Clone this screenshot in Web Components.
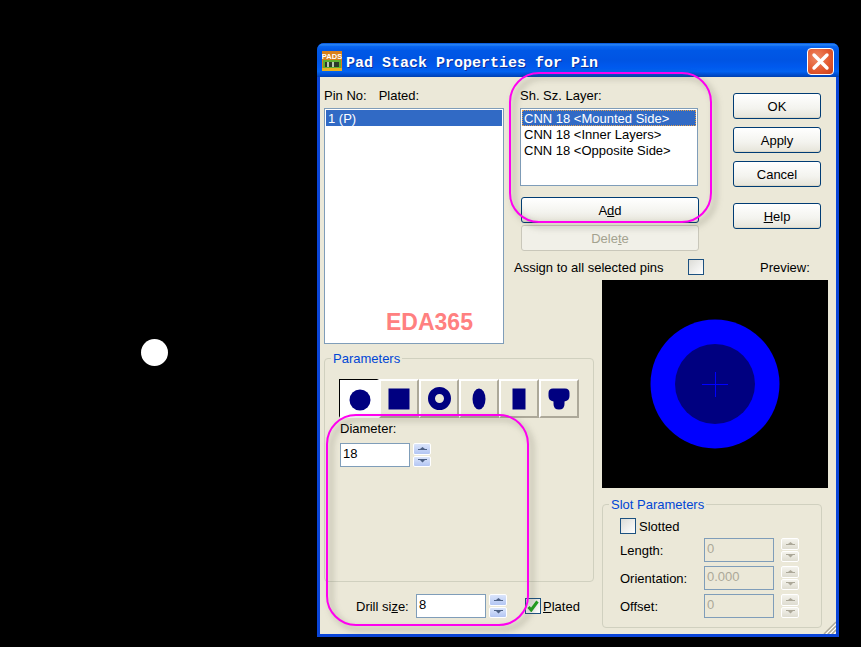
<!DOCTYPE html>
<html>
<head>
<meta charset="utf-8">
<title>Pad Stack Properties</title>
<style>
  html, body { margin: 0; height: 647px; overflow: hidden; background: #000; }
  body { position: relative; font: 13px "Liberation Sans", Arial, sans-serif; color: #000; }
  .pad-dot { position: absolute; left: 141px; top: 339px; width: 27px; height: 27px; border-radius: 50%; background: #fff; }
</style>
</head>
<body>
<div class="pad-dot"></div>

<xp-window caption="Pad Stack Properties for Pin">
  <pad-stack-dialog></pad-stack-dialog>
</xp-window>

<script>
/** Luna style window frame: caption bar, client area and size grip. */
class XpWindow extends HTMLElement {
  constructor() {
    super();
    this.attachShadow({ mode: "open" });
    this.shadowRoot.innerHTML = `
      <style>
        :host { display: block; position: absolute; left: 317px; top: 43px; width: 522px; height: 594px; box-sizing: border-box;
          background: #0a45d8; border-radius: 7px 7px 0 0; overflow: hidden; }
        .bar { display: flex; align-items: center; height: 34px; padding: 0 5px; box-sizing: border-box;
          background: linear-gradient(#0050d8 0%, #2a86f5 5%, #0a66f0 10%, #0058e6 22%, #0054e3 50%, #0059ee 70%, #0262f0 84%, #0050d4 92%, #0040b0 100%); }
        .icon { width: 20px; height: 20px; flex: none; margin-top: 2px; }
        .caption { margin-left: 4px; flex: 1; color: #fff; font: bold 15px "Liberation Mono", monospace; white-space: nowrap;
          text-shadow: 1px 1px 0 #0a2f9c; margin-top: 6px; }
        .close { width: 27px; height: 27px; flex: none; box-sizing: border-box; margin-top: 3px; border: 1px solid #fff; border-radius: 4px;
          background: radial-gradient(circle at 35% 35%, #ee8a66, #e2562c 60%, #c8401c); display: flex; align-items: center; justify-content: center; }
        .client { position: relative; height: 557px; margin: 0 3px; background: #ebe8d8; }
        .grip { position: absolute; right: 0; bottom: 0; width: 13px; height: 13px; }
      </style>
      <div class="bar">
        <svg class="icon" viewBox="0 0 20 20">
          <rect width="20" height="20" fill="#d8801a"/>
          <text x="10" y="7.5" text-anchor="middle" font-family="Liberation Sans" font-weight="bold" font-size="7.5" fill="#fff">PADS</text>
          <rect x="1" y="9" width="18" height="8" fill="#5fae2e"/>
          <rect x="3" y="11" width="14" height="5" fill="#2a3a2a"/>
          <rect x="5" y="11" width="2" height="5" fill="#b8c8b0"/>
          <rect x="10" y="11" width="2" height="5" fill="#b8c8b0"/>
          <rect x="0" y="17" width="20" height="3" fill="#e8b020"/>
        </svg>
        <div class="caption"></div>
        <div class="close">
          <svg width="19" height="19" viewBox="0 0 19 19"><path d="M3 3 L16 16 M16 3 L3 16" stroke="#fff" stroke-width="3.4" stroke-linecap="round"/></svg>
        </div>
      </div>
      <div class="client">
        <slot></slot>
        <svg class="grip" viewBox="0 0 13 13">
          <path d="M13 1 L1 13 M13 5 L5 13 M13 9 L9 13" stroke="#aca899" stroke-width="1.4"/>
          <path d="M13 3 L3 13 M13 7 L7 13 M13 11 L11 13" stroke="#fff" stroke-width="1"/>
        </svg>
      </div>`;
  }

  connectedCallback() {
    this.shadowRoot.querySelector(".caption").textContent = this.getAttribute("caption") || "";
  }
}

/** Push button. Attributes: disabled. */
class XpButton extends HTMLElement {
  constructor() {
    super();
    this.attachShadow({ mode: "open" });
    this.shadowRoot.innerHTML = `
      <style>
        :host { display: flex; align-items: center; justify-content: center; box-sizing: border-box; height: 26px;
          border: 1px solid #003c74; border-radius: 3px; background: linear-gradient(#fff, #f3f3ee 60%, #e6e4d9); box-shadow: inset 0 -1px 0 #dcd8c8; }
        :host([disabled]) { border-color: #c9c7ba; background: #f1f0e8; box-shadow: none; color: #a3a28f; }
      </style>
      <slot></slot>`;
  }
}

/** White list box. */
class XpListbox extends HTMLElement {
  constructor() {
    super();
    this.attachShadow({ mode: "open" });
    this.shadowRoot.innerHTML = `
      <style>
        :host { display: block; box-sizing: border-box; border: 1px solid #7f9db9; background: #fff; padding: 1px; }
      </style>
      <slot></slot>`;
  }
}

class XpListitem extends HTMLElement {
  constructor() {
    super();
    this.attachShadow({ mode: "open" });
    this.shadowRoot.innerHTML = `
      <style>
        :host { display: block; box-sizing: border-box; height: 16px; line-height: 18px; padding-left: 2px; white-space: nowrap; }
        :host([selected]) { background: #316ac5; color: #fff; }
        :host([focused]) { outline: 1px dotted #e0a050; outline-offset: -1px; }
      </style>
      <slot></slot>`;
  }
}

/** Group box with its caption lying over the top edge. */
class XpGroup extends HTMLElement {
  constructor() {
    super();
    this.attachShadow({ mode: "open" });
    this.shadowRoot.innerHTML = `
      <style>
        :host { display: block; position: relative; box-sizing: border-box; border: 1px solid #d0d0bf; border-radius: 4px; }
        .legend { position: absolute; left: 6px; top: -8px; padding: 0 2px; line-height: 15px; background: #ebe8d8; color: #0046d5; }
      </style>
      <div class="legend"></div>
      <slot></slot>`;
  }

  connectedCallback() {
    this.shadowRoot.querySelector(".legend").textContent = this.getAttribute("legend") || "";
  }
}

/** Edit field with an up/down spinner. Attributes: value, disabled. */
class XpSpin extends HTMLElement {
  constructor() {
    super();
    this.attachShadow({ mode: "open" });
    this.shadowRoot.innerHTML = `
      <style>
        :host { display: flex; height: 24px; }
        .field { width: 70px; box-sizing: border-box; border: 1px solid #7f9db9; background: #fff; line-height: 20px; padding-left: 2px; }
        :host([disabled]) .field { background: #ebe8d8; color: #aca899; }
        .arrows { width: 18px; display: flex; flex-direction: column; gap: 1px; }
        .spin-box { margin-left: var(--spin-gap, 3px); }
        .arrow { flex: 1; box-sizing: border-box; border: 1px solid #fff; border-radius: 2px; background: linear-gradient(#dbe5fb, #b3c6f3);
          display: flex; align-items: center; justify-content: center; }
        :host([disabled]) .arrow { background: linear-gradient(#f4f3ec, #dedcd0); }
        svg { fill: #4d6185; }
        :host([disabled]) svg { fill: #aca899; }
      </style>
      <div class="field"></div>
      <div class="arrows spin-box">
        <div class="arrow"><svg width="9" height="4" viewBox="0 0 9 4"><path d="M4.5 0 L7 2 H9 V3 H0 V2 H2 Z"/></svg></div>
        <div class="arrow"><svg width="9" height="4" viewBox="0 0 9 4"><path d="M0 0 H9 V1 H7 L4.5 3.5 L2 1 H0 Z"/></svg></div>
      </div>`;
  }

  connectedCallback() {
    this.shadowRoot.querySelector(".field").textContent = this.getAttribute("value") || "";
  }
}

/** Check box; the label goes in the slot. Attributes: checked. */
class XpCheck extends HTMLElement {
  constructor() {
    super();
    this.attachShadow({ mode: "open" });
    this.shadowRoot.innerHTML = `
      <style>
        :host { display: flex; align-items: center; gap: 3px; height: 16px; }
        .box { position: relative; width: 16px; height: 16px; flex: none; box-sizing: border-box; border: 1px solid #1c5180;
          background: linear-gradient(135deg, #dcdcd7, #fff); }
        svg { display: none; position: absolute; left: 1px; top: 1px; }
        :host([checked]) svg { display: block; }
      </style>
      <div class="box"><svg width="12" height="12" viewBox="0 0 12 12"><path d="M1.5 7 L4.2 10 L10.5 1.5" fill="none" stroke="#21a121" stroke-width="3"/></svg></div>
      <slot></slot>`;
  }
}

/** Flat toolbar button for one pad shape. Attributes: pressed. */
class PadShape extends HTMLElement {
  constructor() {
    super();
    this.attachShadow({ mode: "open" });
    this.shadowRoot.innerHTML = `
      <style>
        :host { display: flex; align-items: center; justify-content: center; box-sizing: border-box; width: 40px; height: 39px;
          border: 2px solid; border-color: #fff #aca899 #aca899 #fff; background: #ebe8d8; }
        :host([pressed]) { border-color: #000 #fff #fff #000; border-width: 1px 2px 2px 1px; background: #fff; padding: 4px 0 0 2px; }
        ::slotted(svg) { fill: #000080; display: block; }
      </style>
      <slot></slot>`;
  }
}

/** Hand drawn magenta call-out lying over the dialog. */
class CallOut extends HTMLElement {
  constructor() {
    super();
    this.attachShadow({ mode: "open" });
    this.shadowRoot.innerHTML = `
      <style>
        :host { display: block; position: absolute; box-sizing: border-box; border: 2px solid #ff00f0; border-radius: 30px;
          filter: drop-shadow(4px 4px 3px rgba(70, 70, 50, .5)); pointer-events: none; }
      </style>`;
  }
}

/** The dialog's content. */
class PadStackDialog extends HTMLElement {
  constructor() {
    super();
    this.attachShadow({ mode: "open" });
    this.shadowRoot.innerHTML = `
      <style>
        :host { display: grid; box-sizing: border-box; height: 557px; padding: 11px 0 0 4px;
          grid-template-columns: 190px 84px 238px; grid-template-rows: 192px 71px 146px 137px; }
        .head { display: flex; gap: 12px; height: 20px; line-height: 16px; }
        .pins { grid-column: 1; grid-row: 1 / 3; }
        .pins xp-listbox { width: 180px; height: 236px; }
        .layers { grid-column: 2 / 4; grid-row: 1; display: flex; flex-direction: column; }
        .top { display: flex; height: 171px; }
        .stack { width: 219px; padding-left: 6px; box-sizing: border-box; }
        .stack xp-listbox { width: 178px; height: 78px; }
        .stack xp-button { width: 178px; margin: 11px 0 0 1px; }
        .stack xp-button + xp-button { margin-top: 2px; }
        .actions { width: 88px; padding-top: 5px; display: flex; flex-direction: column; gap: 8px; }
        .actions .help { margin-top: 8px; }
        .assign { display: flex; align-items: center; height: 16px; }
        .assign span:first-child { width: 174px; }
        .assign span:last-child { margin-left: 56px; }
        .preview { grid-column: 3; grid-row: 2 / 4; margin-left: 4px; width: 226px; height: 208px; background: #000; }
        .preview svg { display: block; }
        .params { grid-column: 1 / 3; grid-row: 3 / 5; padding-top: 7px; }
        .params xp-group { width: 270px; height: 224px; padding: 20px 0 0 14px; }
        .shapes { display: flex; }
        .diam-label { margin: 3px 0 0 1px; height: 22px; line-height: 15px; }
        .diam { margin-left: 1px; }
        .drill { display: flex; align-items: center; margin: 12px 0 0 32px; }
        .drill .name { width: 60px; }
        .drill xp-check { margin-left: 18px; gap: 2px; }
        .slot { grid-column: 3; grid-row: 4; margin: 7px 0 0 4px; width: 220px; height: 124px; }
        .slot xp-group { height: 124px; padding: 13px 0 0 17px; }
        .slot-row { display: flex; align-items: center; margin-top: 4px; --spin-gap: 7px; }
        .slot-row span { width: 84px; }
        u { text-underline-offset: 1px; }
        .watermark { position: absolute; left: 66px; top: 232px; color: #ff8080; font: bold 23px "Liberation Sans", Arial, sans-serif; }
        .one { left: 189px; top: -5px; width: 203px; height: 151px; }
        .two { left: 6px; top: 337px; width: 203px; height: 212px; }
      </style>

      <section class="pins">
        <div class="head"><span>Pin No:</span><span>Plated:</span></div>
        <xp-listbox><xp-listitem selected>1 (P)</xp-listitem></xp-listbox>
      </section>

      <section class="layers">
        <div class="top">
          <div class="stack">
            <div class="head"><span>Sh. Sz. Layer:</span></div>
            <xp-listbox>
              <xp-listitem selected focused>CNN 18 &lt;Mounted Side&gt;</xp-listitem>
              <xp-listitem>CNN 18 &lt;Inner Layers&gt;</xp-listitem>
              <xp-listitem>CNN 18 &lt;Opposite Side&gt;</xp-listitem>
            </xp-listbox>
            <xp-button>A<u>d</u>d</xp-button>
            <xp-button disabled>Dele<u>t</u>e</xp-button>
          </div>
          <div class="actions">
            <xp-button>OK</xp-button>
            <xp-button>Apply</xp-button>
            <xp-button>Cancel</xp-button>
            <xp-button class="help"><u>H</u>elp</xp-button>
          </div>
        </div>
        <div class="assign"><span>Assign to all selected pins</span><xp-check></xp-check><span>Preview:</span></div>
      </section>

      <section class="preview">
        <svg width="226" height="208" viewBox="0 0 226 208">
          <circle cx="113" cy="104" r="64.5" fill="#0000ff"/>
          <circle cx="113" cy="104" r="40" fill="#000080"/>
          <path d="M100 104.5 H126 M113.5 92 V117" stroke="#0000ff" stroke-width="1"/>
        </svg>
      </section>

      <section class="params">
        <xp-group legend="Parameters">
          <div class="shapes">
            <pad-shape pressed><svg width="22" height="22" viewBox="0 0 22 22"><circle cx="11" cy="11" r="10.5"/></svg></pad-shape>
            <pad-shape><svg width="22" height="22" viewBox="0 0 22 22"><rect x="0.5" y="0.5" width="21" height="21"/></svg></pad-shape>
            <pad-shape><svg width="23" height="23" viewBox="0 0 23 23"><path fill-rule="evenodd" d="M11.5 0a11.5 11.5 0 1 0 0 23a11.5 11.5 0 1 0 0-23zM11.5 7a4.5 4.5 0 1 1 0 9a4.5 4.5 0 1 1 0-9z"/></svg></pad-shape>
            <pad-shape><svg width="14" height="22" viewBox="0 0 14 22"><ellipse cx="7" cy="11" rx="6.5" ry="10.5"/></svg></pad-shape>
            <pad-shape><svg width="14" height="22" viewBox="0 0 14 22"><rect x="0.5" y="0.5" width="13" height="21"/></svg></pad-shape>
            <pad-shape><svg width="22" height="22" viewBox="0 0 22 22"><path d="M5 0.5 H17 Q21.5 0.5 21.5 5 V8 Q21.5 12.5 16.5 13.5 V16 Q16.5 21.5 11 21.5 Q5.5 21.5 5.5 16 V13.5 Q0.5 12.5 0.5 8 V5 Q0.5 0.5 5 0.5 Z"/></svg></pad-shape>
          </div>
          <div class="diam-label">Diameter:</div>
          <xp-spin class="diam" value="18"></xp-spin>
        </xp-group>
        <div class="drill">
          <span class="name">Drill si<u>z</u>e:</span>
          <xp-spin value="8"></xp-spin>
          <xp-check checked><span><u>P</u>lated</span></xp-check>
        </div>
      </section>

      <section class="slot">
        <xp-group legend="Slot Parameters">
          <xp-check><span>Slotted</span></xp-check>
          <div class="slot-row"><span>Length:</span><xp-spin disabled value="0"></xp-spin></div>
          <div class="slot-row"><span>Orientation:</span><xp-spin disabled value="0.000"></xp-spin></div>
          <div class="slot-row"><span>Offset:</span><xp-spin disabled value="0"></xp-spin></div>
        </xp-group>
      </section>

      <div class="watermark">EDA365</div>
      <call-out class="one"></call-out>
      <call-out class="two"></call-out>
    `;
  }
}

customElements.define("xp-window", XpWindow);
customElements.define("xp-button", XpButton);
customElements.define("xp-listbox", XpListbox);
customElements.define("xp-listitem", XpListitem);
customElements.define("xp-group", XpGroup);
customElements.define("xp-spin", XpSpin);
customElements.define("xp-check", XpCheck);
customElements.define("pad-shape", PadShape);
customElements.define("call-out", CallOut);
customElements.define("pad-stack-dialog", PadStackDialog);
</script>
</body>
</html>
